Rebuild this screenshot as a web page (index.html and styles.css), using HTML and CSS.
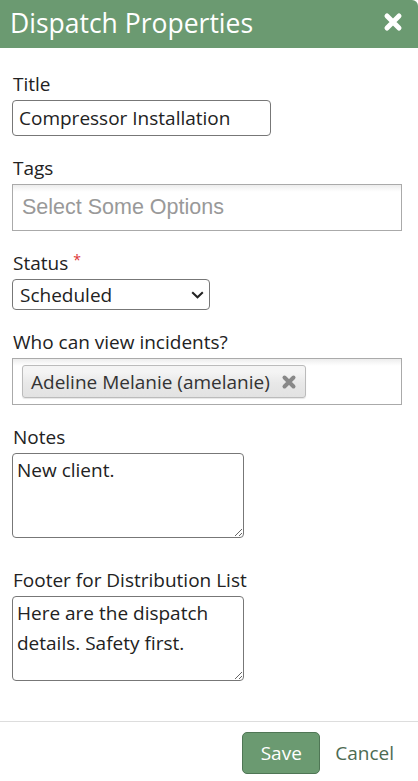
FILE: index.html
```html
<html>
  <head>
    <title>Dispatch Properties</title>
    <link rel="stylesheet" href="styles.css">
  </head>
  <body>
    <div class="modal">
      <div class="modal-header">
        <span class="modal-title">Dispatch Properties</span>
        <span class="close">
          <svg width="20" height="20" viewBox="0 0 20 20">
            <path d="M4 4 L16 16 M16 4 L4 16" stroke="#fff" stroke-width="5" stroke-linecap="round"/>
          </svg>
        </span>
      </div>

      <div class="modal-body">
        <div class="field">
          <label>Title</label>
          <input class="text-input" type="text" value="Compressor Installation">
        </div>

        <div class="field">
          <label>Tags</label>
          <div class="chosen-box">
            <span class="placeholder">Select Some Options</span>
          </div>
        </div>

        <div class="field">
          <label>Status <span class="req">*</span></label>
          <span class="select-wrap">
            <select class="select">
              <option>Scheduled</option>
            </select>
            <svg class="chevron" width="13" height="8" viewBox="0 0 13 8">
              <path d="M1.2 1.2 L6.5 6.3 L11.8 1.2" fill="none" stroke="#222" stroke-width="2"/>
            </svg>
          </span>
        </div>

        <div class="field">
          <label>Who can view incidents?</label>
          <div class="chosen-box chosen-multi">
            <span class="chip">Adeline Melanie (amelanie)
              <svg class="chip-x" width="16" height="16" viewBox="0 0 16 16">
                <path d="M3.5 3.5 L12.5 12.5 M12.5 3.5 L3.5 12.5" stroke="#888" stroke-width="4" stroke-linecap="round"/>
              </svg>
            </span>
          </div>
        </div>

        <div class="field field-notes">
          <label>Notes</label>
          <textarea class="area">New client.</textarea>
        </div>

        <div class="field">
          <label>Footer for Distribution List</label>
          <textarea class="area">Here are the dispatch details. Safety first.</textarea>
        </div>
      </div>

      <div class="modal-footer">
        <button class="btn-save">Save</button>
        <a class="cancel">Cancel</a>
      </div>
    </div>
  </body>
</html>
```

FILE: styles.css
```css
body {
  margin: 0;
  background: #fff;
  font-family: "Open Sans", "Noto Sans", sans-serif;
  color: #222;
}
.modal {
  width: 418px;
  height: 781px;
  background: #fff;
}
.modal-header {
  height: 48px;
  background: #6b9a71;
  display: flex;
  align-items: center;
  justify-content: space-between;
  padding: 0 15px 0 10px;
  border-top-right-radius: 6px;
}
.modal-title {
  color: #fff;
  font-size: 26.5px;
  margin-top: -3px;
}
.close {
  display: flex;
  margin-top: -4px;
}
.modal-body {
  padding: 24px 16px 0 12px;
}
.field {
  margin-bottom: 20px;
}
.field label {
  display: block;
  font-size: 19px;
  line-height: 24px;
  margin-bottom: 4px;
  padding-left: 1px;
}
.req {
  color: #d33;
  font-size: 14px;
  vertical-align: top;
  line-height: 18px;
}
.text-input {
  box-sizing: border-box;
  width: 259px;
  height: 36px;
  border: 1px solid #777;
  border-radius: 4px;
  padding: 0 6px;
  font-family: inherit;
  font-size: 19px;
  color: #222;
  display: block;
}
.chosen-box {
  box-sizing: border-box;
  width: 390px;
  height: 47px;
  border: 1px solid #aaa;
  background: linear-gradient(#eee 1%, #fff 15%);
  display: flex;
  align-items: center;
  padding: 0 9px;
}
.placeholder {
  font-family: "Liberation Sans", Arial, sans-serif;
  font-size: 21.5px;
  color: #999;
}
.select-wrap {
  position: relative;
  display: inline-block;
  vertical-align: top;
}
.select {
  appearance: none;
  -webkit-appearance: none;
  box-sizing: border-box;
  width: 198px;
  height: 31px;
  border: 1px solid #777;
  border-radius: 4px;
  background: #fff;
  padding: 0 7px;
  font-family: inherit;
  font-size: 19px;
  color: #222;
  display: block;
}
.chevron {
  position: absolute;
  right: 6px;
  top: 12px;
  pointer-events: none;
}
.chosen-multi {
  height: 47px;
}
.chip {
  box-sizing: border-box;
  height: 33px;
  display: inline-flex;
  align-items: center;
  gap: 11px;
  padding: 0 8px 0 8px;
  border: 1px solid #bbb;
  border-radius: 3px;
  background: linear-gradient(#f4f4f4 20%, #e8e8e8 55%, #e2e2e2);
  box-shadow: 0 1px 1px rgba(0, 0, 0, 0.1);
  font-size: 19px;
  color: #333;
}
.area {
  display: block;
  box-sizing: border-box;
  width: 232px;
  height: 85px;
  border: 1px solid #777;
  border-radius: 4px;
  padding: 1px 4px;
  font-family: inherit;
  font-size: 19px;
  line-height: 30px;
  color: #222;
  resize: both;
}
.field-notes {
  margin-bottom: 30px;
}
.modal-footer {
  margin-top: 40px;
  border-top: 1px solid #ddd;
  display: flex;
  justify-content: flex-end;
  align-items: center;
  gap: 15px;
  padding: 10px 24px 0 0;
}
.btn-save {
  width: 78px;
  height: 42px;
  background: #6b9a71;
  border: 1px solid #4f7655;
  border-radius: 5px;
  color: #fff;
  font-family: inherit;
  font-size: 19px;
}
.cancel {
  color: #4d6b52;
  font-size: 19px;
}
```
